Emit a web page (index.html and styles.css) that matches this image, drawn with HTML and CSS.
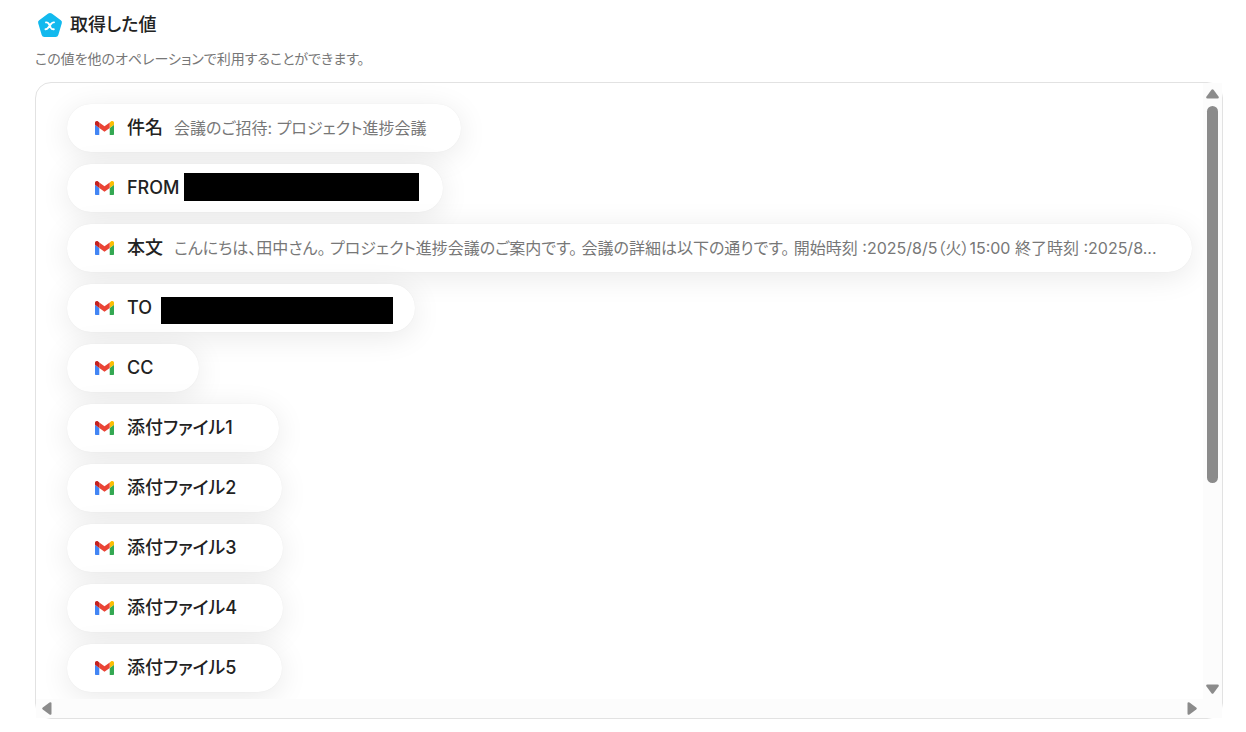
FILE: index.html
```html
<!DOCTYPE html>
<html lang="ja">
<head>
    <meta charset="UTF-8">
    <meta name="viewport" content="width=device-width, initial-scale=1.0">
    <title>取得した値</title>
    <link rel="stylesheet" href="styles.css">
</head>
<body>
    <svg class="sprite" aria-hidden="true">
        <symbol id="gmail" viewBox="0 0 20 15" preserveAspectRatio="none">
            <path fill="#4285f4" d="M0 4l4.500 3.500V15H.800Q0 15 0 14.200z"/>
            <path fill="#34a853" d="M20 4l-4.500 3.500V15h3.700q.800 0 .800-.800z"/>
            <path fill="#fbbc04" d="M15.500 1.500 17 .400c1.400-1 3 0 3 1.500V4l-4.500 3.500z"/>
            <path fill="#ea4335" d="M4.500 1.500 10 5.700l5.500-4.200v6L10 11.500l-5.500-4z"/>
            <path fill="#c5221f" d="M4.500 1.500 3 .400C1.600-.600 0 .400 0 1.900V4l4.500 3.500z"/>
        </symbol>
    </svg>

    <header class="header">
        <h1 class="title">
            <svg class="title-icon" viewBox="0 0 26 26" aria-hidden="true">
                <path fill="#12b9ee" d="M11.200 1.600a3 3 0 0 1 3.600 0l9 6.700a2.600 2.600 0 0 1 1 3l-3.500 11.600a2.800 2.800 0 0 1-2.700 2H7.400a2.800 2.800 0 0 1-2.700-2L1.200 11.300a2.600 2.600 0 0 1 1-3z"/>
                <path fill="none" stroke="#fff" stroke-width="1.900" stroke-linecap="round" stroke-linejoin="round" d="M9 10.400c1.800-.200 2.200.300 2.900 1.600l1.800 3.600c.700 1.300 1.400 1.900 3.100 1.700M17 10.400c-1.300-.200-2 .400-2.900 1.500l-2.600 3.400c-.900 1.200-1.600 2.100-3 2"/>
            </svg>
            取得した値
        </h1>
        <p class="lead">この値を他のオペレーションで利用することができます。</p>
    </header>

    <main class="panel">
        <ul class="chips">
            <li class="chip">
                <svg class="chip-icon" aria-hidden="true"><use href="#gmail"/></svg>
                <span class="chip-label">件名</span>
                <span class="chip-value">会議のご招待: プロジェクト進捗会議</span>
            </li>
            <li class="chip">
                <svg class="chip-icon" aria-hidden="true"><use href="#gmail"/></svg>
                <span class="chip-label">FROM</span>
                <span class="chip-value masked masked-from"></span>
            </li>
            <li class="chip">
                <svg class="chip-icon" aria-hidden="true"><use href="#gmail"/></svg>
                <span class="chip-label">本文</span>
                <span class="chip-value">こんにちは、田中さん。 プロジェクト進捗会議のご案内です。 会議の詳細は以下の通りです。 開始時刻 :2025/8/5（火）15:00 終了時刻 :2025/8...</span>
            </li>
            <li class="chip">
                <svg class="chip-icon" aria-hidden="true"><use href="#gmail"/></svg>
                <span class="chip-label">TO</span>
                <span class="chip-value masked masked-to"></span>
            </li>
            <li class="chip">
                <svg class="chip-icon" aria-hidden="true"><use href="#gmail"/></svg>
                <span class="chip-label">CC</span>
                <span class="chip-value"></span>
            </li>
            <li class="chip">
                <svg class="chip-icon" aria-hidden="true"><use href="#gmail"/></svg>
                <span class="chip-label">添付ファイル1</span>
                <span class="chip-value"></span>
            </li>
            <li class="chip">
                <svg class="chip-icon" aria-hidden="true"><use href="#gmail"/></svg>
                <span class="chip-label">添付ファイル2</span>
                <span class="chip-value"></span>
            </li>
            <li class="chip">
                <svg class="chip-icon" aria-hidden="true"><use href="#gmail"/></svg>
                <span class="chip-label">添付ファイル3</span>
                <span class="chip-value"></span>
            </li>
            <li class="chip">
                <svg class="chip-icon" aria-hidden="true"><use href="#gmail"/></svg>
                <span class="chip-label">添付ファイル4</span>
                <span class="chip-value"></span>
            </li>
            <li class="chip">
                <svg class="chip-icon" aria-hidden="true"><use href="#gmail"/></svg>
                <span class="chip-label">添付ファイル5</span>
                <span class="chip-value"></span>
            </li>
        </ul>

        <div class="bar bar-y">
            <button class="arrow" type="button" aria-label="上へスクロール">
                <svg width="13" height="10" viewBox="0 0 13 10"><path d="M5.500.800q1-1.200 2 0l5 6.700q1 2-1 2h-10q-2 0-1-2z"/></svg>
            </button>
            <div class="track"><div class="thumb"></div></div>
            <button class="arrow" type="button" aria-label="下へスクロール">
                <svg width="13" height="10" viewBox="0 0 13 10"><path d="M5.500 9.200q1 1.200 2 0l5-6.700q1-2-1-2h-10q-2 0-1 2z"/></svg>
            </button>
        </div>
        <div class="bar bar-x">
            <button class="arrow" type="button" aria-label="左へスクロール">
                <svg width="10" height="13" viewBox="0 0 10 13"><path d="M.800 5.500q-1.200 1 0 2l6.700 5q2 1 2-1v-10q0-2-2-1z"/></svg>
            </button>
            <button class="arrow" type="button" aria-label="右へスクロール">
                <svg width="10" height="13" viewBox="0 0 10 13"><path d="M9.200 5.500q1.200 1 0 2l-6.700 5q-2 1-2-1v-10q0-2 2-1z"/></svg>
            </button>
        </div>
        <div class="corner"></div>
    </main>
</body>
</html>
```
FILE: styles.css
```css
* {
    box-sizing: border-box;
}
body {
    display: flex;
    flex-direction: column;
    height: 100vh;
    margin: 0;
    padding: 12px 23px 13px 35px;
    background: #fff;
    color: #222;
    font-family: Inter, "Noto Sans CJK JP", sans-serif;
    font-feature-settings: "palt";
}
.sprite {
    position: absolute;
    width: 0;
    height: 0;
}
.header {
    height: 70px;
}
.title {
    display: flex;
    align-items: center;
    gap: 7px;
    margin: 0;
    padding-left: 2px;
    font-size: 18px;
    font-weight: 500;
    line-height: 26px;
}
.title-icon {
    width: 26px;
    height: 26px;
}
.lead {
    margin: 10px 0 0;
    color: #777;
    font-size: 14px;
    line-height: 22px;
}
.panel {
    display: grid;
    grid-template-columns: minmax(0, 1fr) 19px;
    grid-template-rows: minmax(0, 1fr) 19px;
    flex: 1;
    min-height: 0;
    border: 1px solid #e2e2e2;
    border-radius: 16px;
}
.chips {
    display: flex;
    flex-direction: column;
    align-items: flex-start;
    gap: 12px;
    margin: 0;
    padding: 21px 31px;
    border-top-left-radius: 15px;
    list-style: none;
    overflow: hidden;
}
.chip {
    display: flex;
    flex: none;
    align-items: center;
    height: 48px;
    padding: 0 35px 0 28px;
    border-radius: 24px;
    background: #fff;
    box-shadow: 0 0 1px rgba(0, 0, 0, 0.08), 0 5px 30px rgba(0, 0, 0, 0.09);
    white-space: nowrap;
}
.chip-icon {
    width: 19px;
    height: 14px;
    margin-right: 13px;
}
.chip-label {
    margin-right: 11px;
    font-size: 18px;
    font-weight: 500;
    line-height: 24px;
}
.chip-value {
    color: #777;
    font-size: 16px;
    line-height: 24px;
}
.masked {
    position: relative;
    width: 217px;
    height: 28px;
}
.masked::after {
    content: "";
    position: absolute;
    background: #000;
}
.masked-from::after {
    inset: -1px -11px 1px -7px;
}
.masked-to::after {
    inset: 3px -13px -2px -2px;
}
.bar {
    display: flex;
    align-items: center;
    justify-content: space-between;
    background: #fcfcfc;
}
.bar-y {
    flex-direction: column;
    padding: 6px 0 5px;
}
.bar-x {
    padding: 0 6px;
}
.arrow {
    display: flex;
    padding: 0;
    border: 0;
    background: none;
    fill: #8b8b8b;
}
.track {
    flex: 1;
    width: 11px;
    margin: 7px 0;
}
.thumb {
    height: 66%;
    border-radius: 6px;
    background: #8b8b8b;
}
.corner {
    background: #fcfcfc;
}
```
